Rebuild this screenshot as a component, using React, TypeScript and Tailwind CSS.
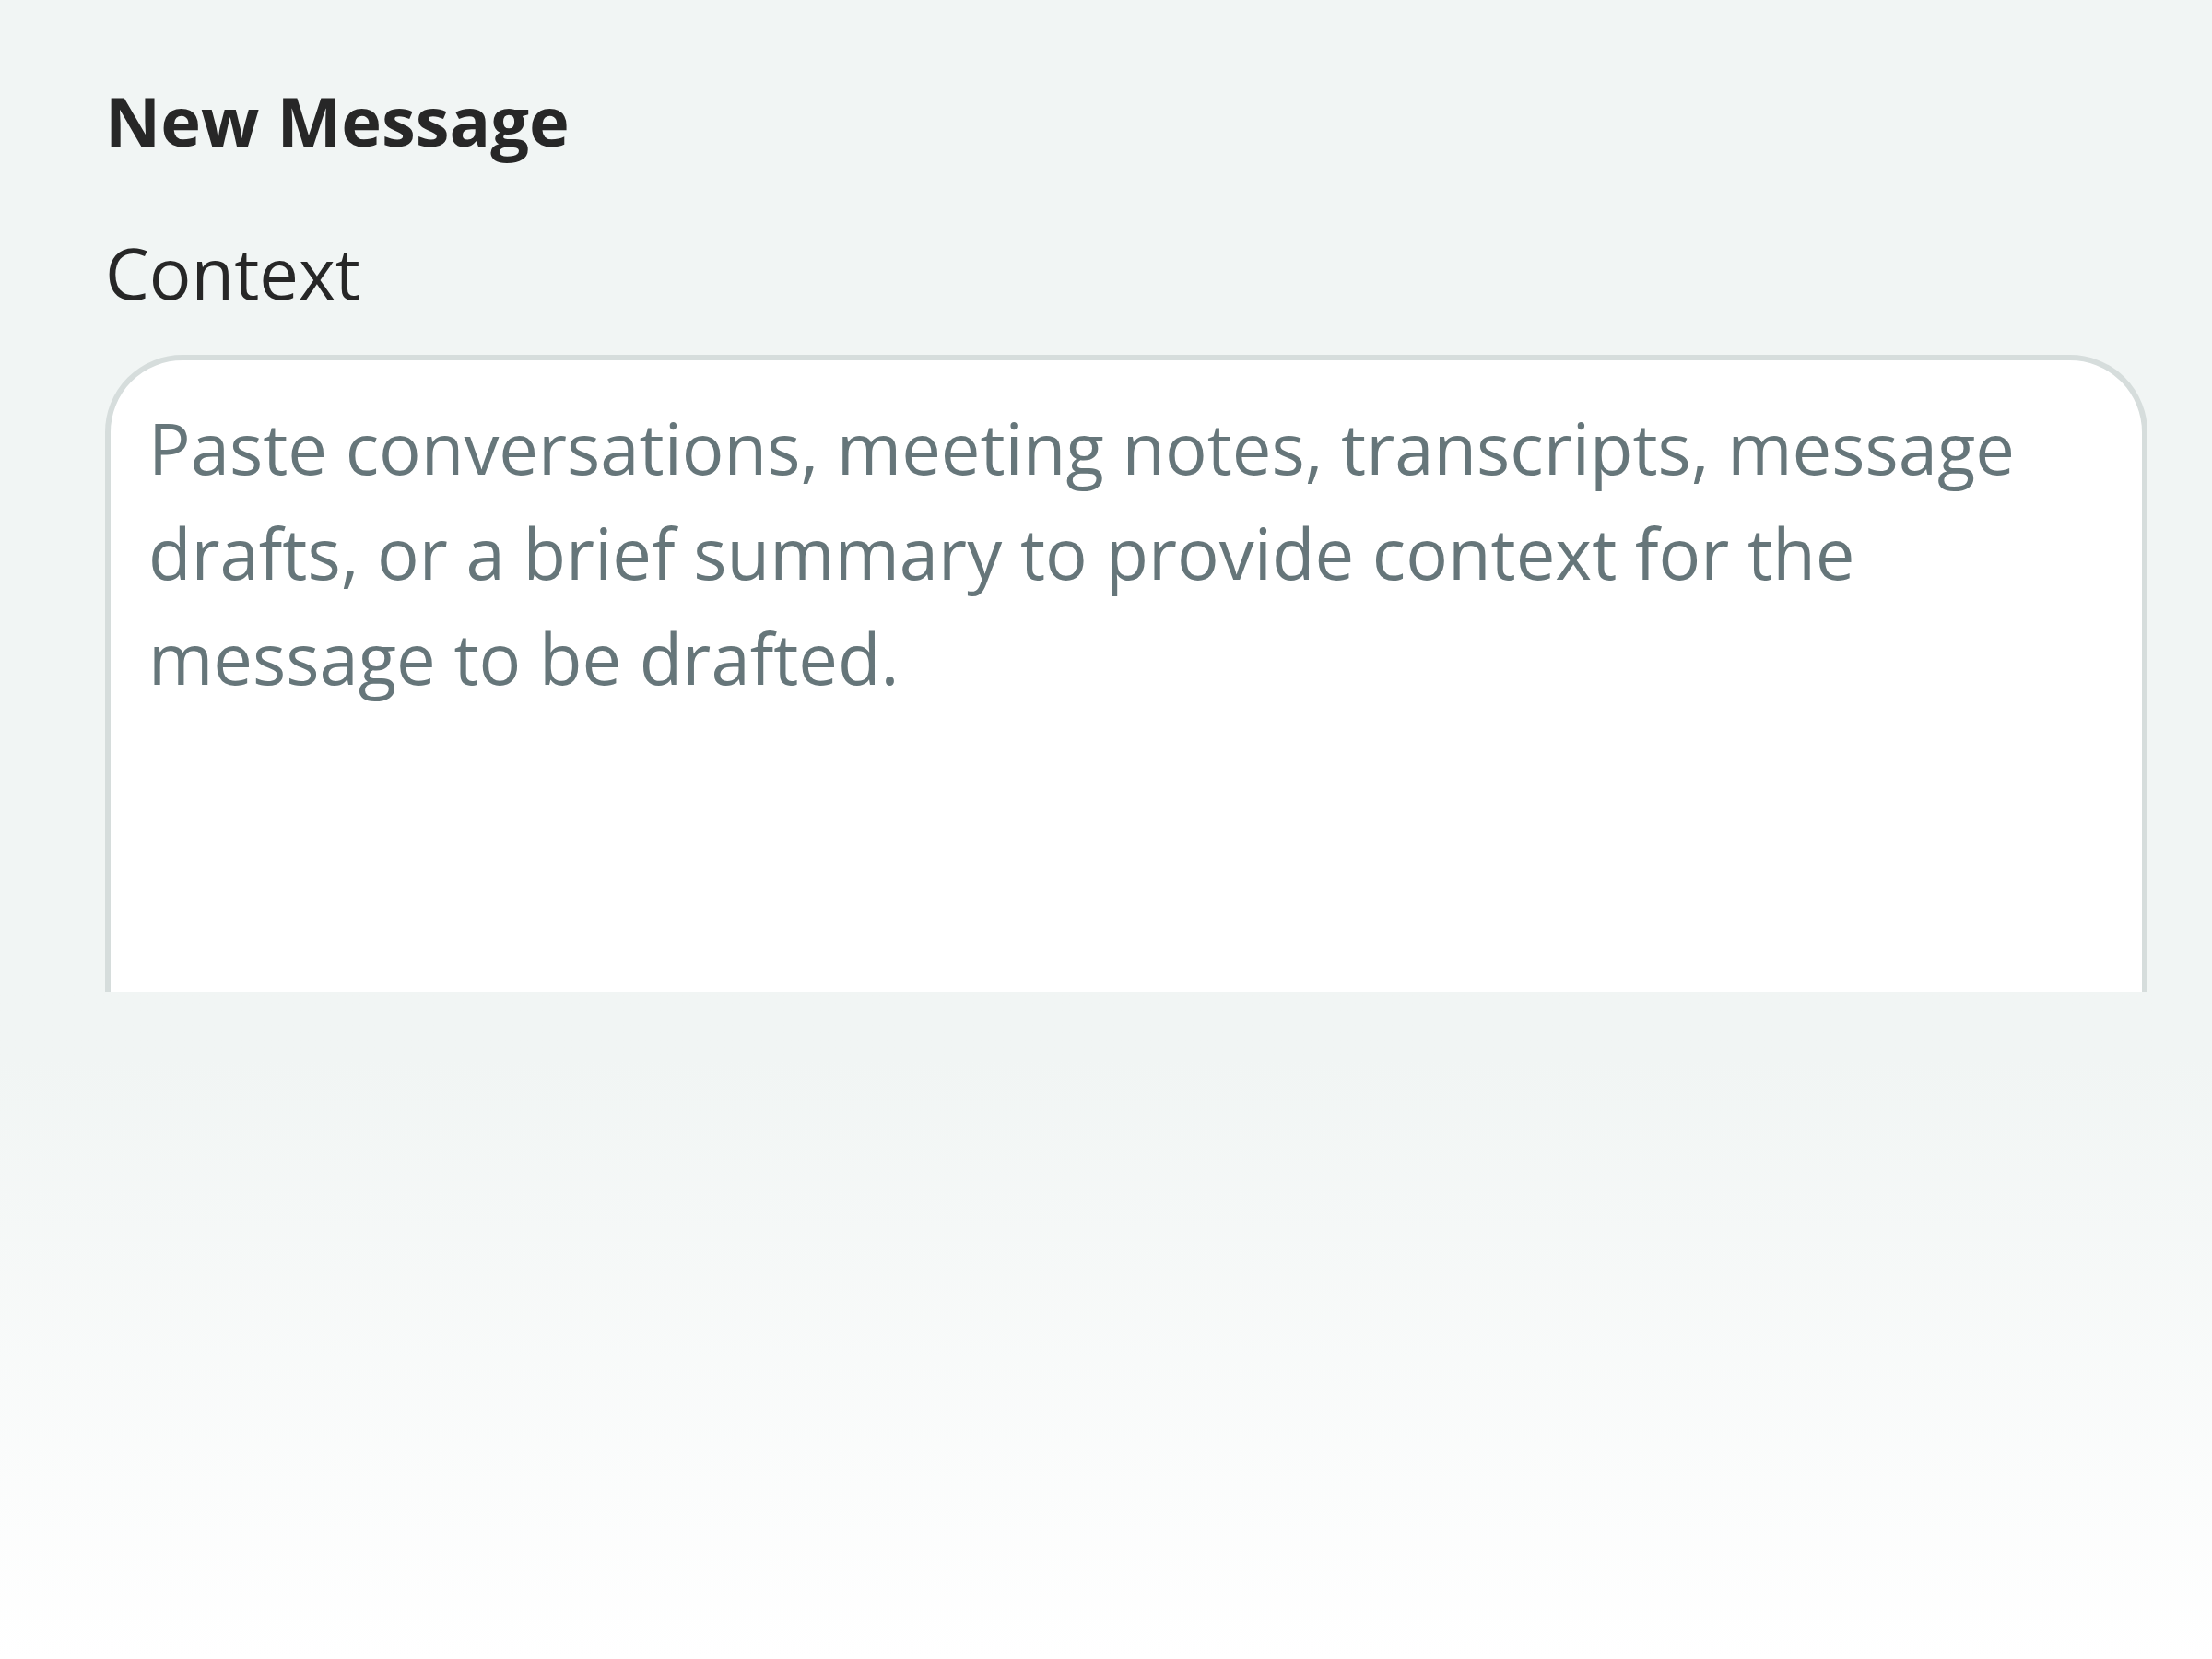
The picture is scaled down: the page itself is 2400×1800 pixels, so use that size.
import React from "react";

export default function App() {
  return (
    <div
      className="relative min-h-[1800px] w-full overflow-hidden bg-[#f1f5f4] pl-[114px] pr-[70px] pt-[87px]"
      style={{ fontFamily: '"Open Sans", "Noto Sans", sans-serif' }}
    >
      <h1 className="text-[74px] font-bold leading-[1.2] text-[#272727]">New Message</h1>
      <label
        htmlFor="context"
        className="mt-[74px] block text-[76px] font-normal leading-[1.2] text-[#272727]"
      >
        Context
      </label>
      <textarea
        id="context"
        className="mt-[44px] block h-[1000px] w-full resize-none rounded-[84px] border-[6px] border-[#d6dddc] bg-white pl-[41px] pr-[40px] pt-[38px] text-[76px] leading-[114px] text-[#272727] outline-none placeholder:text-[#66767a]"
        placeholder="Paste conversations, meeting notes, transcripts, message drafts, or a brief summary to provide context for the message to be drafted."
      />
      <div className="pointer-events-none absolute inset-x-0 top-[1076px] bottom-0 bg-gradient-to-b from-[#f1f5f4] from-10% to-white" />
    </div>
  );
}
